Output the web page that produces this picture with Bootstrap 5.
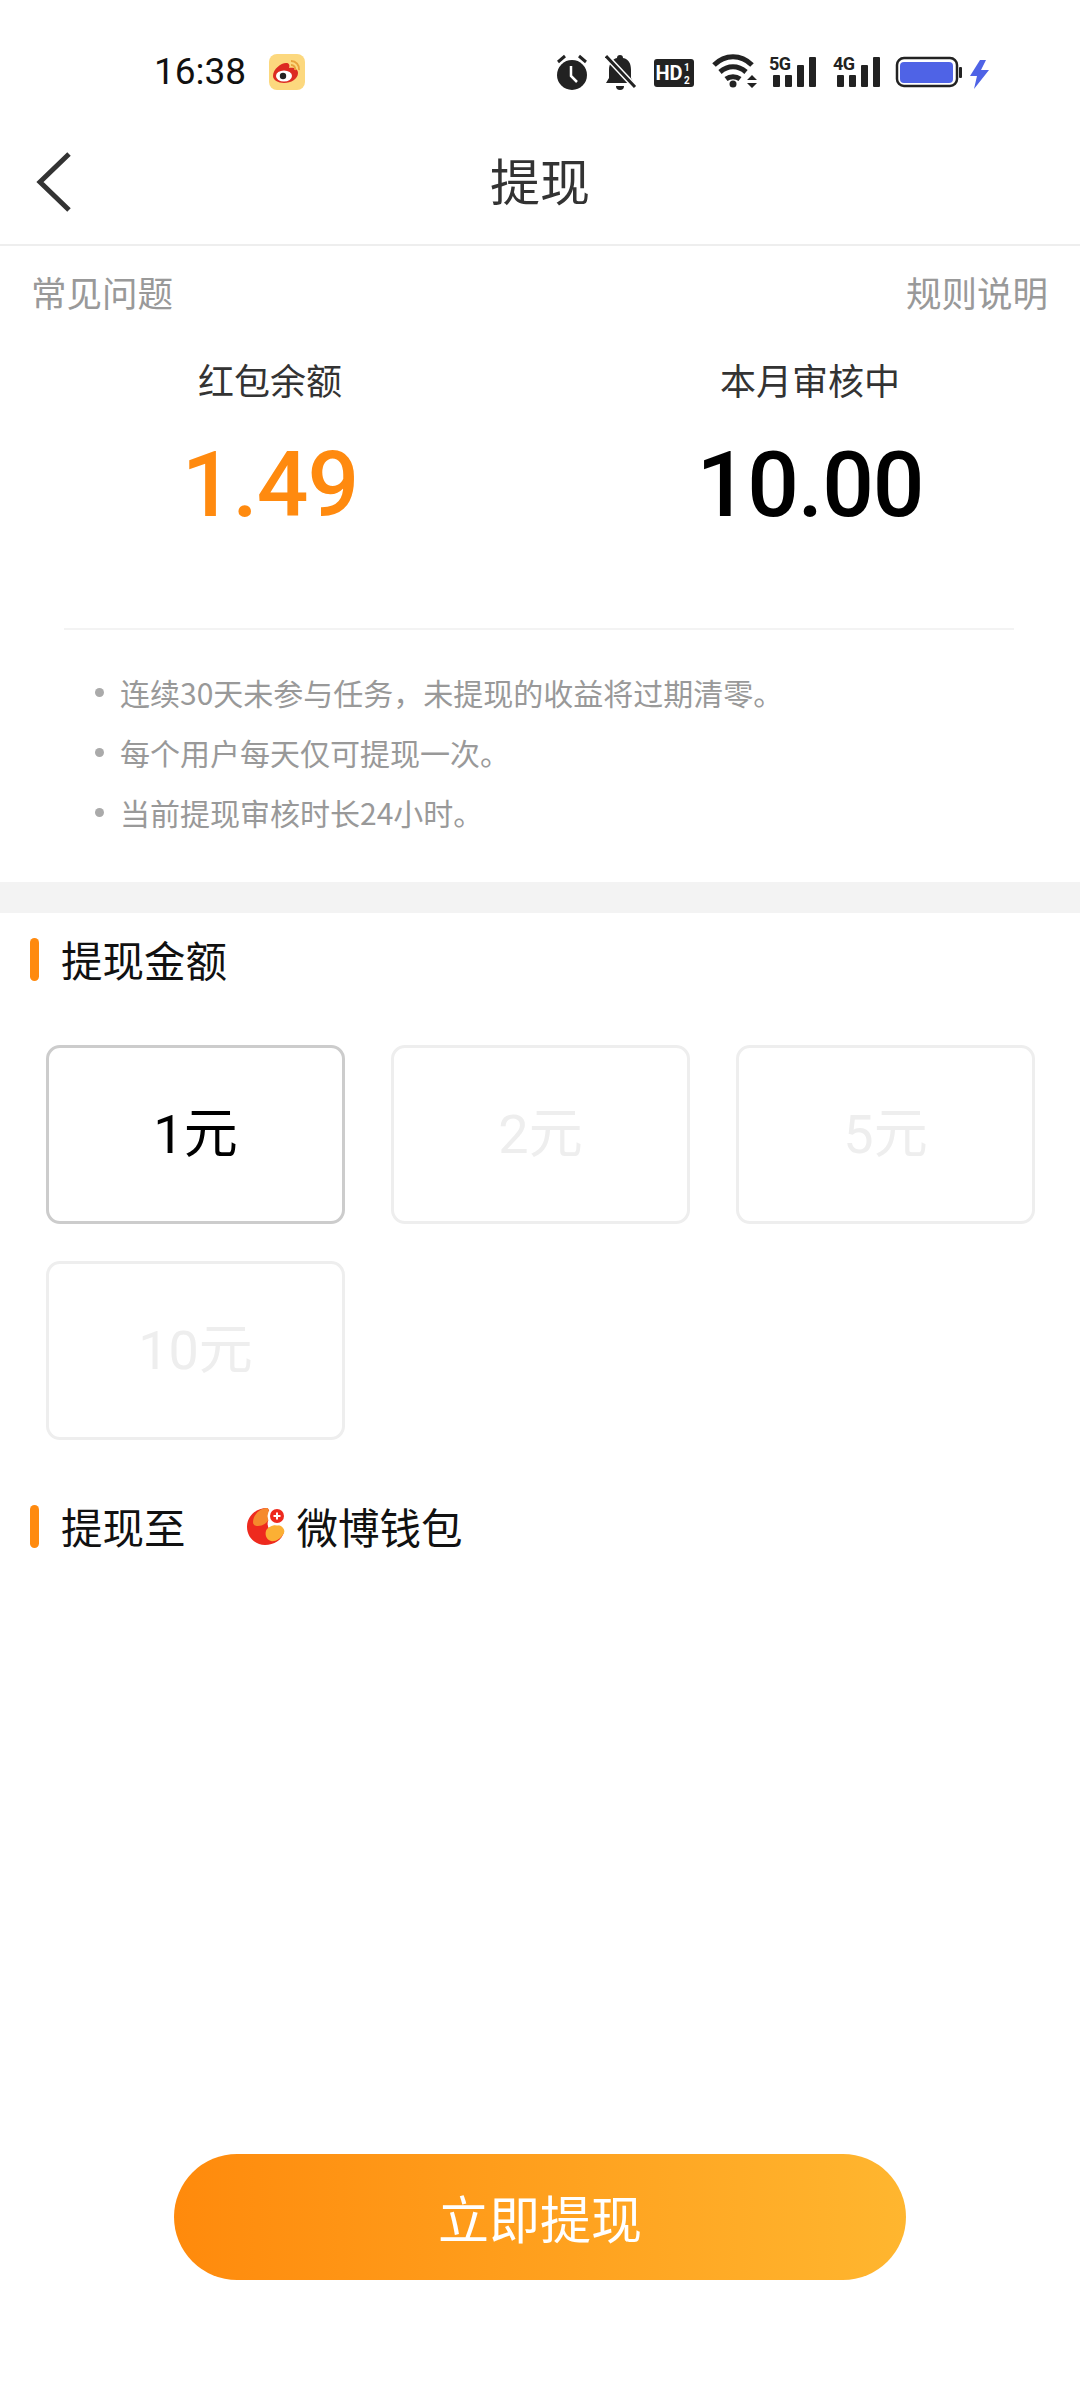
<!DOCTYPE html>
<html lang="zh-CN">
<head>
  <meta charset="UTF-8">
  <meta name="viewport" content="width=device-width, initial-scale=1.0">
  <title>提现</title>
  <link href="https://cdn.jsdelivr.net/npm/bootstrap@5.3.0/dist/css/bootstrap.min.css" rel="stylesheet">
  <style>
    body {
      background-color: #fff;
      font-family: "Noto Sans CJK SC", "Roboto", sans-serif;
      color: #000;
    }
    .page-wrap { width: 1080px; height: 2400px; }
    .status-row { height: 120px; padding: 24px 91px 0 154px; }
    .status-time { font-family: "Roboto", sans-serif; font-size: 37px; line-height: 40px; color: #111; }
    .status-app { margin-left: 23px; }
    .top-bar { height: 126px; border-bottom: 2px solid #eee; padding-bottom: 6px; }
    .top-bar svg { position: absolute; left: 36px; top: 32px; }
    .top-title { font-size: 50px; color: #333; line-height: 1; }
    .link-row { padding: 27px 32px 0 31px; font-size: 35.5px; line-height: 38px; color: #999; }
    .stat-row { margin-top: 48px; }
    .stat-label { font-size: 36px; line-height: 40px; color: #333; }
    .stat-num { font-family: "Roboto", sans-serif; font-weight: 500; font-size: 91px; line-height: 100px; margin-top: 36px; letter-spacing: -1px; }
    .stat-orange { color: #ff8a0f; }
    .rule-line { margin: 93px 66px 0 64px; border-top: 2px solid #f3f3f3; }
    .tip-list { margin: 32px 0 0; padding-left: 120px; font-size: 30px; line-height: 60px; color: #999; }
    .tip-list li { position: relative; }
    .tip-list li::before {
      content: ""; position: absolute; left: -25px; top: 26px;
      width: 9px; height: 9px; border-radius: 50%; background: #aaa;
    }
    .gray-band { height: 31px; background: #f3f3f3; margin-top: 40px; }
    .sec-head { padding-left: 30px; font-size: 41.5px; line-height: 44px; color: #111; }
    .sec-bar { width: 9px; height: 43px; border-radius: 5px; background: #ff8a0f; margin-right: 22px; }
    .amount-grid {
      display: grid; grid-template-columns: repeat(3, 299px);
      column-gap: 46px; row-gap: 37px; padding: 64px 0 0 46px;
    }
    .amount-tile {
      height: 179px; border: 3px solid #eee; border-radius: 14px;
      font-size: 54px; color: #eee; font-family: "Roboto", "Noto Sans CJK SC", sans-serif;
    }
    .amount-tile.picked { border-color: #ccc; color: #000; }
    .pay-head { margin-top: 64px; }
    .wallet-name { margin-left: 61px; }
    .wallet-name svg { margin-right: 12px; }
    .go-btn {
      width: 732px; height: 126px; margin: 0 0 120px 174px; padding: 0;
      background: linear-gradient(90deg, #ff8a0c, #ffb62f);
      border: none; color: #fff; font-size: 51px;
    }
  </style>
</head>
<body>
  <div class="page-wrap d-flex flex-column">
    <!-- status bar -->
    <div class="status-row d-flex align-items-center">
      <span class="status-time">16:38</span>
      <svg class="status-app" width="36" height="36" viewBox="0 0 36 36">
        <rect width="36" height="36" rx="8" fill="#fcd87e"/>
        <path d="M4 22c0-7 8-13 13-13 3 0 4 2 3 5 5-1 9 1 9 5 0 6-7 10-14 10-6 0-11-3-11-7z" fill="#dc2a22"/>
        <ellipse cx="15" cy="22" rx="8" ry="5.5" fill="#fff"/>
        <circle cx="14" cy="22" r="3.2" fill="#222"/>
        <path d="M22 7a8 8 0 0 1 8 9M22 11a4 4 0 0 1 4 5" fill="none" stroke="#e8a33c" stroke-width="2"/>
      </svg>
      <div class="ms-auto d-flex align-items-center">
        <svg width="48" height="40" viewBox="0 0 48 40" fill="#222">
          <circle cx="15" cy="23" r="15"/>
          <path d="M14 14v10l6 6" fill="none" stroke="#fff" stroke-width="2.5"/>
          <path d="M1 10l7-6M29 10l-7-6" stroke="#222" stroke-width="3"/>
        </svg>
        <svg width="49" height="40" viewBox="0 0 49 40" fill="#222">
          <path d="M15 3a3 3 0 0 1 3 3c6 1 8 6 8 12v8l3 5H1l3-5v-8c0-6 3-11 8-12a3 3 0 0 1 3-3z"/>
          <path d="M11 34h8a4 4 0 0 1-8 0z"/>
          <path d="M1 4l29 31" stroke="#fff" stroke-width="6"/>
          <path d="M1 4l29 31" stroke="#222" stroke-width="3"/>
        </svg>
        <svg width="58" height="40" viewBox="0 0 58 40">
          <rect y="7" width="40" height="28" rx="3" fill="#222"/>
          <text x="1.5" y="28" font-family="Roboto" font-weight="700" font-size="20" fill="#fff">HD</text>
          <text x="30" y="19" font-family="Roboto" font-weight="700" font-size="10" fill="#fff">1</text>
          <text x="30" y="32" font-family="Roboto" font-weight="700" font-size="10" fill="#fff">2</text>
        </svg>
        <svg width="57" height="40" viewBox="0 0 57 40" fill="none" stroke="#222" stroke-width="5">
          <path d="M2 13c11-11 27-11 38 0"/>
          <path d="M8 20c8-7 18-7 26 0"/>
          <path d="M14 27c4-3 10-3 14 0"/>
          <circle cx="21" cy="32" r="3.5" fill="#222" stroke="none"/>
          <path d="M35 28l5-5 5 5zM35 31l5 5 5-5z" fill="#222" stroke="none"/>
        </svg>
        <svg width="64" height="40" viewBox="0 0 64 40" fill="#222">
          <text x="0" y="18" font-family="Roboto" font-weight="700" font-size="18" letter-spacing="-.5">5G</text>
          <rect x="4" y="23" width="7" height="12" rx="1"/>
          <rect x="16" y="23" width="7" height="12" rx="1"/>
          <rect x="28" y="13" width="7" height="22" rx="1"/>
          <rect x="40" y="5" width="7" height="30" rx="1"/>
        </svg>
        <svg width="62" height="40" viewBox="0 0 62 40" fill="#222">
          <text x="0" y="18" font-family="Roboto" font-weight="700" font-size="18" letter-spacing="-.5">4G</text>
          <rect x="4" y="23" width="7" height="12" rx="1"/>
          <rect x="16" y="23" width="7" height="12" rx="1"/>
          <rect x="28" y="13" width="7" height="22" rx="1"/>
          <rect x="40" y="5" width="7" height="30" rx="1"/>
        </svg>
        <svg width="75" height="40" viewBox="0 0 75 40">
          <rect x="2" y="6" width="60" height="28" rx="7" fill="none" stroke="#222" stroke-width="2.5"/>
          <rect x="5" y="10" width="53" height="21" rx="4" fill="#4f63e6"/>
          <rect x="64" y="15" width="3" height="11" rx="1" fill="#222"/>
        </svg>
        <svg width="19" height="40" viewBox="0 0 19 40" fill="#4f63e6">
          <path d="M10 8L0 24h7L4 37l15-19h-8l5-10z"/>
        </svg>
      </div>
    </div>

    <!-- title bar -->
    <div class="top-bar position-relative d-flex align-items-center justify-content-center">
      <svg width="36" height="60" viewBox="0 0 36 60" fill="none" stroke="#333" stroke-width="5">
        <path d="M33 2L4 30l29 28"/>
      </svg>
      <span class="top-title">提现</span>
    </div>

    <div class="link-row d-flex justify-content-between">
      <span>常见问题</span>
      <span>规则说明</span>
    </div>

    <div class="stat-row row g-0 text-center">
      <div class="col-6">
        <div class="stat-label">红包余额</div>
        <div class="stat-num stat-orange">1.49</div>
      </div>
      <div class="col-6">
        <div class="stat-label">本月审核中</div>
        <div class="stat-num">10.00</div>
      </div>
    </div>

    <div class="rule-line"></div>

    <ul class="tip-list list-unstyled">
      <li>连续30天未参与任务，未提现的收益将过期清零。</li>
      <li>每个用户每天仅可提现一次。</li>
      <li>当前提现审核时长24小时。</li>
    </ul>

    <div class="gray-band"></div>

    <div class="sec-head d-flex align-items-center mt-4">
      <span class="sec-bar"></span>
      <span>提现金额</span>
    </div>

    <div class="amount-grid">
      <div class="amount-tile picked d-flex align-items-center justify-content-center">1元</div>
      <div class="amount-tile d-flex align-items-center justify-content-center">2元</div>
      <div class="amount-tile d-flex align-items-center justify-content-center">5元</div>
      <div class="amount-tile d-flex align-items-center justify-content-center">10元</div>
    </div>

    <div class="sec-head pay-head d-flex align-items-center">
      <span class="sec-bar"></span>
      <span>提现至</span>
      <span class="wallet-name d-flex align-items-center">
        <svg width="38" height="38" viewBox="0 0 38 38">
          <path d="M20 1C9 1 0 9 0 20c0 10 8 18 18 18 9 0 17-5 19-13-6 3-12 1-15-3-2-4-2-8 1-11 1-3-1-10-3-10z" fill="#ee2a1e"/>
          <path d="M20 1c-7 0-14 7-14 14 0 3 2 4 5 4 5 0 9-3 11-7 1-3 0-11-2-11z" fill="#f58a2c"/>
          <path d="M20 22c4-4 10-5 14-3 3 2 4 5 3 7-3 6-9 9-13 8-5-1-7-8-4-12z" fill="#fbb034"/>
          <circle cx="30" cy="9" r="9.5" fill="#fff"/>
          <circle cx="30" cy="9" r="7" fill="#ee2a1e"/>
          <path d="M30 5.5v7M26.5 9h7" stroke="#fff" stroke-width="2"/>
        </svg>
        微博钱包
      </span>
    </div>

    <button type="button" class="btn go-btn rounded-pill mt-auto">立即提现</button>
  </div>
</body>
</html>
